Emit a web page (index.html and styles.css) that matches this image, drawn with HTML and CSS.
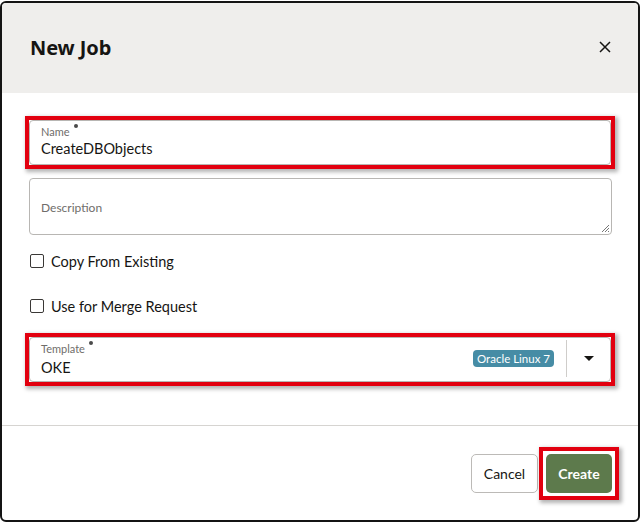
FILE: index.html
```html
<!DOCTYPE html>
<html>
<head>
<meta charset="utf-8">
<link rel="stylesheet" href="styles.css">
</head>
<body>
<div class="dialog">
  <div class="header">
    <h1 class="title">New Job</h1>
    <button class="close" aria-label="Close">
      <svg width="12" height="12" viewBox="0 0 12 12"><path d="M1 1 L11 11 M11 1 L1 11" stroke="#161513" stroke-width="1.5" fill="none"/></svg>
    </button>
  </div>
  <div class="body">
    <div class="mark">
      <div class="field">
        <div class="label">Name <span class="req"></span></div>
        <div class="value">CreateDBObjects</div>
      </div>
    </div>
    <div class="textarea">
      <span class="placeholder">Description</span>
      <svg class="grip" width="10" height="10" viewBox="0 0 10 10"><path d="M9 2 L2 9 M9 5 L5 9 M9 8 L8 9" stroke="#777" stroke-width="1" fill="none"/></svg>
    </div>
    <label class="check first"><span class="box"></span><span>Copy From Existing</span></label>
    <label class="check second"><span class="box"></span><span>Use for Merge Request</span></label>
    <div class="mark template">
      <div class="field select">
        <div class="select-main">
          <div class="label">Template <span class="req"></span></div>
          <div class="value">OKE</div>
        </div>
        <span class="badge">Oracle Linux 7</span>
        <span class="divider"></span>
        <span class="caret"></span>
      </div>
    </div>
  </div>
  <div class="footer">
    <button class="btn cancel">Cancel</button>
    <div class="btn-mark">
      <button class="btn create">Create</button>
    </div>
  </div>
</div>
</body>
</html>
```
FILE: styles.css
```css
* { box-sizing: border-box; }
html, body { margin: 0; padding: 0; background: #ffffff; }
body {
  font-family: "Lato", "Noto Sans", sans-serif;
  color: #161513;
  width: 641px;
  height: 523px;
  overflow: hidden;
}
.dialog {
  margin-top: 1px;
  width: 640px;
  height: 521px;
  border: 2px solid #141414;
  border-radius: 6px;
  background: #fff;
  overflow: hidden;
  display: flex;
  flex-direction: column;
}
.header {
  height: 90px;
  background: #efeeec;
  display: flex;
  align-items: center;
  justify-content: space-between;
  padding: 0 26px 0 28px;
  flex: none;
}
.title {
  margin: 0;
  font-family: "Noto Sans", sans-serif;
  font-size: 20px;
  font-weight: 700;
  letter-spacing: -0.1px;
  padding-bottom: 2px;
}
.close {
  background: none;
  border: 0;
  padding: 0;
  width: 24px;
  height: 24px;
  display: flex;
  align-items: center;
  justify-content: center;
  margin-right: -5px;
  margin-bottom: 2px;
}
.body {
  flex: 1;
  padding: 27px 26px 0 27px;
  display: flex;
  flex-direction: column;
}
.mark {
  margin: -4px -3px -4px -4px;
  border: 4px solid #e2000f;
  box-shadow: 2px 2px 4px 1px rgba(0,0,0,0.3);
  background: #fff;
}
.field {
  height: 45px;
  border: 1px solid #b8b6b3;
  border-radius: 4px;
  padding: 4px 11px 0 11px;
  background: #fff;
}
.label {
  font-size: 11px;
  color: #6f6d6a;
  line-height: 13px;
  display: flex;
  align-items: flex-start;
}
.req {
  display: inline-block;
  width: 4px;
  height: 4px;
  border-radius: 50%;
  background: #4a4a4a;
  margin-left: 4px;
  margin-top: -1px;
}
.value {
  font-size: 14.5px;
  line-height: 20px;
  margin-top: 1px;
}
.textarea {
  margin-top: 13px;
  height: 57px;
  border: 1px solid #b8b6b3;
  border-radius: 4px;
  padding: 0 11px;
  display: flex;
  align-items: center;
  position: relative;
}
.placeholder {
  font-size: 12px;
  color: #6f6d6a;
  padding-top: 2px;
}
.grip {
  position: absolute;
  right: 1px;
  bottom: 1px;
}
.check {
  display: flex;
  align-items: center;
  gap: 7px;
  height: 24px;
  font-size: 14.5px;
}
.check.first { margin-top: 14px; }
.check.second { margin-top: 21px; }
.box {
  width: 14px;
  height: 14px;
  border: 1.5px solid #3a3836;
  border-radius: 2px;
  margin-left: 1px;
}
.template { margin-top: 15px; }
.select {
  display: flex;
  align-items: center;
  padding-right: 0;
  padding-top: 0;
}
.select-main {
  flex: 1;
  align-self: flex-start;
  padding-top: 4px;
}
.select-main .value { margin-top: 3px; }
.badge {
  background: #468ca5;
  color: #fff;
  font-size: 11.5px;
  line-height: 17px;
  height: 17px;
  padding: 0 4px;
  border-radius: 4px;
  margin-right: 12px;
  margin-bottom: 2px;
  white-space: nowrap;
}
.divider {
  width: 1px;
  align-self: stretch;
  margin: 2px 0 4px;
  background: #cfcdca;
}
.caret {
  width: 43px;
  display: flex;
  justify-content: center;
  margin-bottom: 2px;
}
.caret::before {
  content: "";
  border-left: 5px solid transparent;
  border-right: 5px solid transparent;
  border-top: 5px solid #161513;
}
.footer {
  flex: none;
  height: 95px;
  border-top: 1px solid #d6d4d1;
  display: flex;
  justify-content: flex-end;
  align-items: flex-start;
  gap: 1px;
  padding: 21px 19px 0 0;
}
.btn {
  height: 39px;
  border-radius: 5px;
  font-family: "Lato", "Noto Sans", sans-serif;
  font-size: 14px;
  padding: 0;
}
.cancel {
  background: #fff;
  border: 1px solid #bcbab7;
  color: #161513;
  width: 67px;
  margin-top: 7px;
  font-weight: 400;
}
.btn-mark {
  border: 4px solid #e2000f;
  padding: 3px;
  background: #fff;
  box-shadow: 2px 2px 4px 1px rgba(0,0,0,0.3);
  display: flex;
}
.create {
  background: #5d7a4c;
  border: 0;
  color: #fff;
  width: 66px;
  font-weight: 700;
}
```
